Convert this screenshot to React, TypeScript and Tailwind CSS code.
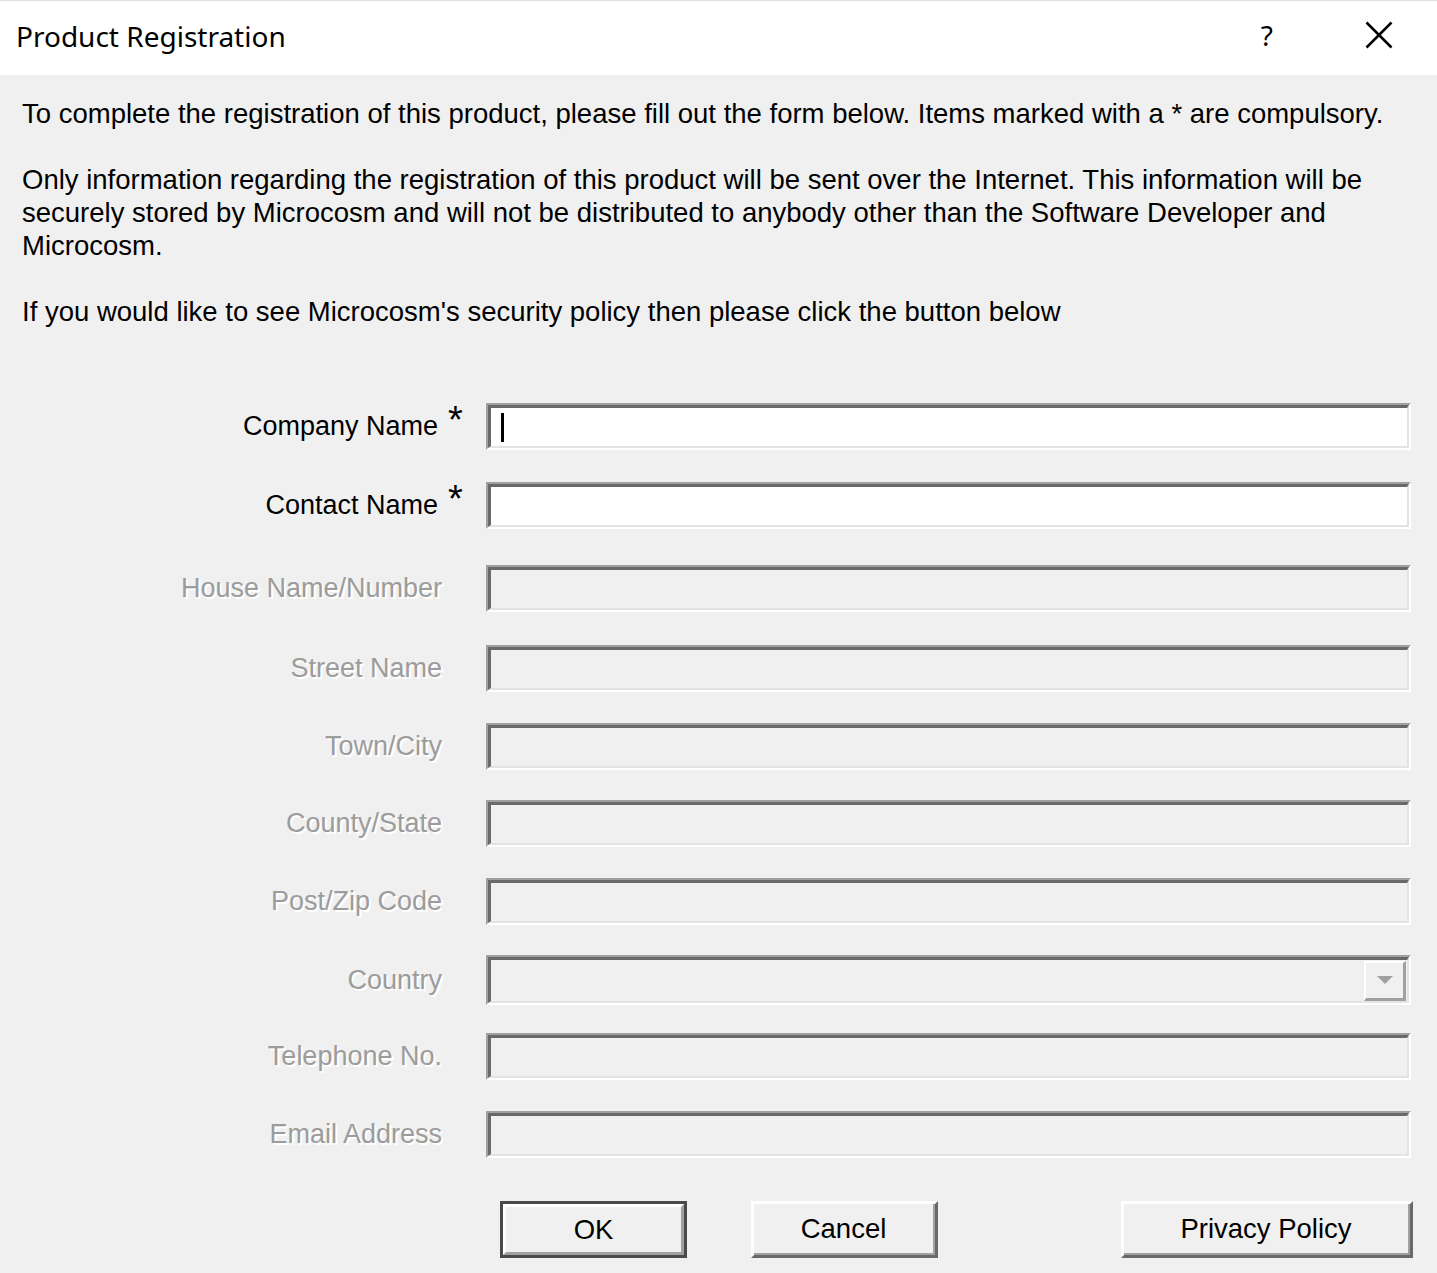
import React from 'react';

interface Field {
  label: string;
  required?: boolean;
  combo?: boolean;
  focused?: boolean;
  gap: string;
}

const FIELDS: Field[] = [
  { label: 'Company Name', required: true, focused: true, gap: 'mt-0' },
  { label: 'Contact Name', required: true, gap: 'mt-[32px]' },
  { label: 'House Name/Number', gap: 'mt-[36px]' },
  { label: 'Street Name', gap: 'mt-[33px]' },
  { label: 'Town/City', gap: 'mt-[31px]' },
  { label: 'County/State', gap: 'mt-[30px]' },
  { label: 'Post/Zip Code', gap: 'mt-[31px]' },
  { label: 'Country', combo: true, gap: 'mt-[30px]' },
  { label: 'Telephone No.', gap: 'mt-[28px]' },
  { label: 'Email Address', gap: 'mt-[31px]' },
];

const BODY_FONT = "font-['Liberation_Sans',Arial,sans-serif]";

function SunkenBox({ enabled, combo, focused }: { enabled: boolean; combo?: boolean; focused?: boolean }) {
  return (
    <div
      className={`flex-1 border-2 border-t-[#a0a0a0] border-l-[#a0a0a0] border-b-white border-r-white ${
        combo ? 'h-[50px]' : 'h-[47px]'
      }`}
    >
      <div
        className={`h-full border-t-[3px] border-l-[3px] border-b-2 border-r-2 border-t-[#696969] border-l-[#696969] border-b-[#e3e3e3] border-r-[#e3e3e3] flex items-center ${
          enabled ? 'bg-white' : 'bg-[#f0f0f0]'
        }`}
      >
        {focused && <div className="ml-[10px] w-[3px] h-[29px] bg-black" />}
        {combo && (
          <div className="ml-auto mr-[1px] w-[42px] h-[40px] border-t-2 border-l-2 border-t-white border-l-white border-b-[3px] border-r-[3px] border-b-[#a0a0a0] border-r-[#a0a0a0] bg-[#f0f0f0] flex items-center justify-center">
            <svg width="18" height="10" viewBox="0 0 18 10">
              <path d="M1 1 H17 L9 9 Z" fill="#a0a0a0" />
            </svg>
          </div>
        )}
      </div>
    </div>
  );
}

function DialogButton({ label, isDefault, width }: { label: string; isDefault?: boolean; width: string }) {
  return (
    <div
      className={`${width} h-[57px] shrink-0 ${
        isDefault
          ? 'border-[3px] border-[#4a4a4a]'
          : 'border-t-[3px] border-l-[3px] border-t-white border-l-white border-b-[3px] border-r-[3px] border-b-[#696969] border-r-[#696969]'
      }`}
    >
      <div
        className={`h-full flex items-center justify-center text-[27.5px] text-black bg-[#f0f0f0] ${
          isDefault
            ? 'border-t-[3px] border-l-[3px] border-t-white border-l-white border-b-[3px] border-r-[3px] border-b-[#a0a0a0] border-r-[#a0a0a0]'
            : 'border-b-2 border-r-2 border-b-[#a0a0a0] border-r-[#a0a0a0]'
        }`}
      >
        {label}
      </div>
    </div>
  );
}

export default function App() {
  return (
    <div className={`w-[1437px] h-[1273px] bg-[#f0f0f0] flex flex-col ${BODY_FONT}`}>
      {/* caption */}
      <div className="h-[75px] bg-white border-t border-[#e6dede] flex items-center shrink-0">
        <span className="ml-[16px] -translate-y-[2px] text-[28px] text-black font-['Noto_Sans',sans-serif] leading-none">
          Product Registration
        </span>
        <span className="ml-auto mr-[92px] -translate-y-[3px] text-[28px] text-black font-['Noto_Sans',sans-serif] leading-none">
          ?
        </span>
        <svg className="mr-[44px] -translate-y-[3px]" width="28" height="28" viewBox="0 0 28 28">
          <path d="M1.5 1.5 L26.5 26.5 M26.5 1.5 L1.5 26.5" stroke="#000" strokeWidth="2.5" />
        </svg>
      </div>

      {/* intro text */}
      <div className="pl-[22px] pt-[22px] text-[27.5px] leading-[33px] text-black whitespace-nowrap">
        <p>To complete the registration of this product, please fill out the form below. Items marked with a * are compulsory.</p>
        <p className="mt-[33px]">
          Only information regarding the registration of this product will be sent over the Internet. This information will be
          <br />
          securely stored by Microcosm and will not be distributed to anybody other than the Software Developer and
          <br />
          Microcosm.
        </p>
        <p className="mt-[33px]">If you would like to see Microcosm's security policy then please click the button below</p>
      </div>

      {/* form */}
      <div className="mt-[75px] pr-[26px]">
        {FIELDS.map((f) => {
          const enabled = !!f.required;
          return (
            <div key={f.label} className={`flex items-center ${f.gap}`}>
              <div
                className={`w-[486px] shrink-0 flex justify-end items-center text-[27px] ${
                  f.required ? 'pr-[21px] text-black' : 'pr-[44px] text-[#9c9c9c] [text-shadow:2px_2px_0_#ffffff]'
                }`}
              >
                <span>{f.label}</span>
                {f.required && (
                  <span className="ml-[10px] w-[17px] -translate-y-[13px] text-[38px] leading-none h-[26px]">*</span>
                )}
              </div>
              <SunkenBox enabled={enabled} combo={f.combo} focused={f.focused} />
            </div>
          );
        })}

        <div className="mt-[43px] flex pl-[500px]">
          <DialogButton label="OK" isDefault width="w-[187px]" />
          <div className="ml-[64px] shrink-0">
            <DialogButton label="Cancel" width="w-[187px]" />
          </div>
          <div className="ml-[183px] shrink-0">
            <DialogButton label="Privacy Policy" width="w-[292px]" />
          </div>
        </div>
      </div>
    </div>
  );
}
